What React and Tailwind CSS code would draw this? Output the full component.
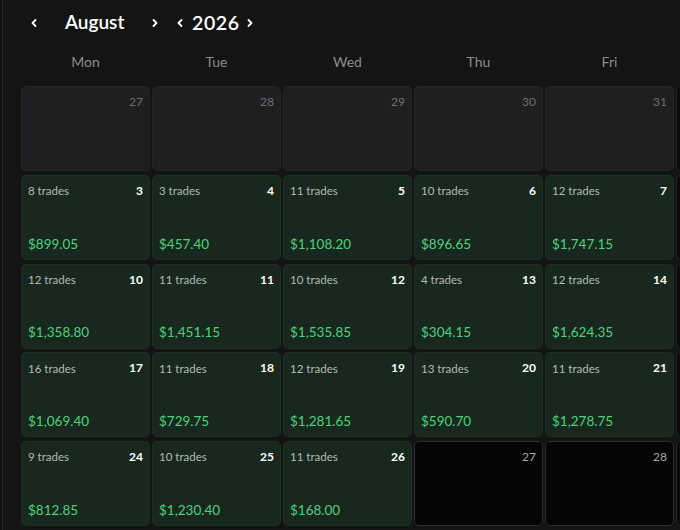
import { ChevronLeft, ChevronRight } from "lucide-react";

const days = ["Mon", "Tue", "Wed", "Thu", "Fri", ""];

// kind: prev = last month, trade = has trades, future = not yet, off = weekend
const weeks = [
  [
    { d: 27, kind: "prev" },
    { d: 28, kind: "prev" },
    { d: 29, kind: "prev" },
    { d: 30, kind: "prev" },
    { d: 31, kind: "prev" },
    { kind: "off" },
  ],
  [
    { d: 3, kind: "trade", n: 8, pnl: "$899.05" },
    { d: 4, kind: "trade", n: 3, pnl: "$457.40" },
    { d: 5, kind: "trade", n: 11, pnl: "$1,108.20" },
    { d: 6, kind: "trade", n: 10, pnl: "$896.65" },
    { d: 7, kind: "trade", n: 12, pnl: "$1,747.15" },
    { kind: "off" },
  ],
  [
    { d: 10, kind: "trade", n: 12, pnl: "$1,358.80" },
    { d: 11, kind: "trade", n: 11, pnl: "$1,451.15" },
    { d: 12, kind: "trade", n: 10, pnl: "$1,535.85" },
    { d: 13, kind: "trade", n: 4, pnl: "$304.15" },
    { d: 14, kind: "trade", n: 12, pnl: "$1,624.35" },
    { kind: "off" },
  ],
  [
    { d: 17, kind: "trade", n: 16, pnl: "$1,069.40" },
    { d: 18, kind: "trade", n: 11, pnl: "$729.75" },
    { d: 19, kind: "trade", n: 12, pnl: "$1,281.65" },
    { d: 20, kind: "trade", n: 13, pnl: "$590.70" },
    { d: 21, kind: "trade", n: 11, pnl: "$1,278.75" },
    { kind: "off" },
  ],
  [
    { d: 24, kind: "trade", n: 9, pnl: "$812.85" },
    { d: 25, kind: "trade", n: 10, pnl: "$1,230.40" },
    { d: 26, kind: "trade", n: 11, pnl: "$168.00" },
    { d: 27, kind: "future" },
    { d: 28, kind: "future" },
    { kind: "off" },
  ],
];

const DayCell = ({ day }) => {
  if (day.kind === "trade") {
    return (
      <div className="h-[85px] rounded-[5px] bg-[#18281f] border border-[#1c3025] px-[6px] pt-[6px] pb-[5px] flex flex-col justify-between">
        <div className="flex justify-between items-center">
          <span className="text-[11.5px] text-[#b4b8b5]">{day.n} trades</span>
          <span className="text-[12px] font-bold text-white">{day.d}</span>
        </div>
        <span className="text-[13.5px] text-[#4fd17c]">{day.pnl}</span>
      </div>
    );
  }
  if (day.kind === "prev") {
    return (
      <div className="h-[85px] rounded-[5px] bg-[#1f1f21] border border-[#242426] px-[6px] pt-[6px] flex justify-end">
        <span className="text-[12px] text-[#6e6e70]">{day.d}</span>
      </div>
    );
  }
  if (day.kind === "future") {
    return (
      <div className="h-[85px] rounded-[5px] bg-[#050505] border border-[#2c2c2c] px-[6px] pt-[6px] flex justify-end">
        <span className="text-[12px] text-[#a8a8a8]">{day.d}</span>
      </div>
    );
  }
  return <div className="h-[85px] rounded-[5px] bg-[#0a0a0a] border border-[#262626]" />;
};

export default function App() {
  return (
    <div
      className="w-[680px] h-[530px] overflow-hidden bg-[#0f0f0f] pl-[2px]"
      style={{ fontFamily: "Lato, 'Noto Sans', sans-serif" }}
    >
      <div className="h-full border-l border-[#2b2b2b] bg-[#141414] pl-[18px]">
        <div className="flex items-center h-[44px] pt-[1px] text-white">
          <button className="ml-[7px] flex">
            <ChevronLeft size={12} strokeWidth={3.6} />
          </button>
          <span className="ml-[25px] w-[60px] text-[19px] font-semibold">August</span>
          <button className="ml-[24px] flex">
            <ChevronRight size={12} strokeWidth={3.6} />
          </button>
          <button className="ml-[13px] flex">
            <ChevronLeft size={12} strokeWidth={3.6} />
          </button>
          <span className="ml-[6px] text-[19.5px] font-semibold tracking-[0.6px]">2026</span>
          <button className="ml-[4px] flex">
            <ChevronRight size={12} strokeWidth={3.6} />
          </button>
        </div>
        <div className="grid grid-cols-[repeat(6,129px)] gap-x-[2px] h-[42px] pt-[8px]">
          {days.map((d, i) => (
            <div key={i} className="text-center text-[14px] leading-[20px] text-[#8c8c8c]">
              {d}
            </div>
          ))}
        </div>
        <div className="grid grid-cols-[repeat(6,129px)] gap-x-[2px] gap-y-[3.75px]">
          {weeks.flat().map((day, i) => (
            <DayCell key={i} day={day} />
          ))}
        </div>
      </div>
    </div>
  );
}
